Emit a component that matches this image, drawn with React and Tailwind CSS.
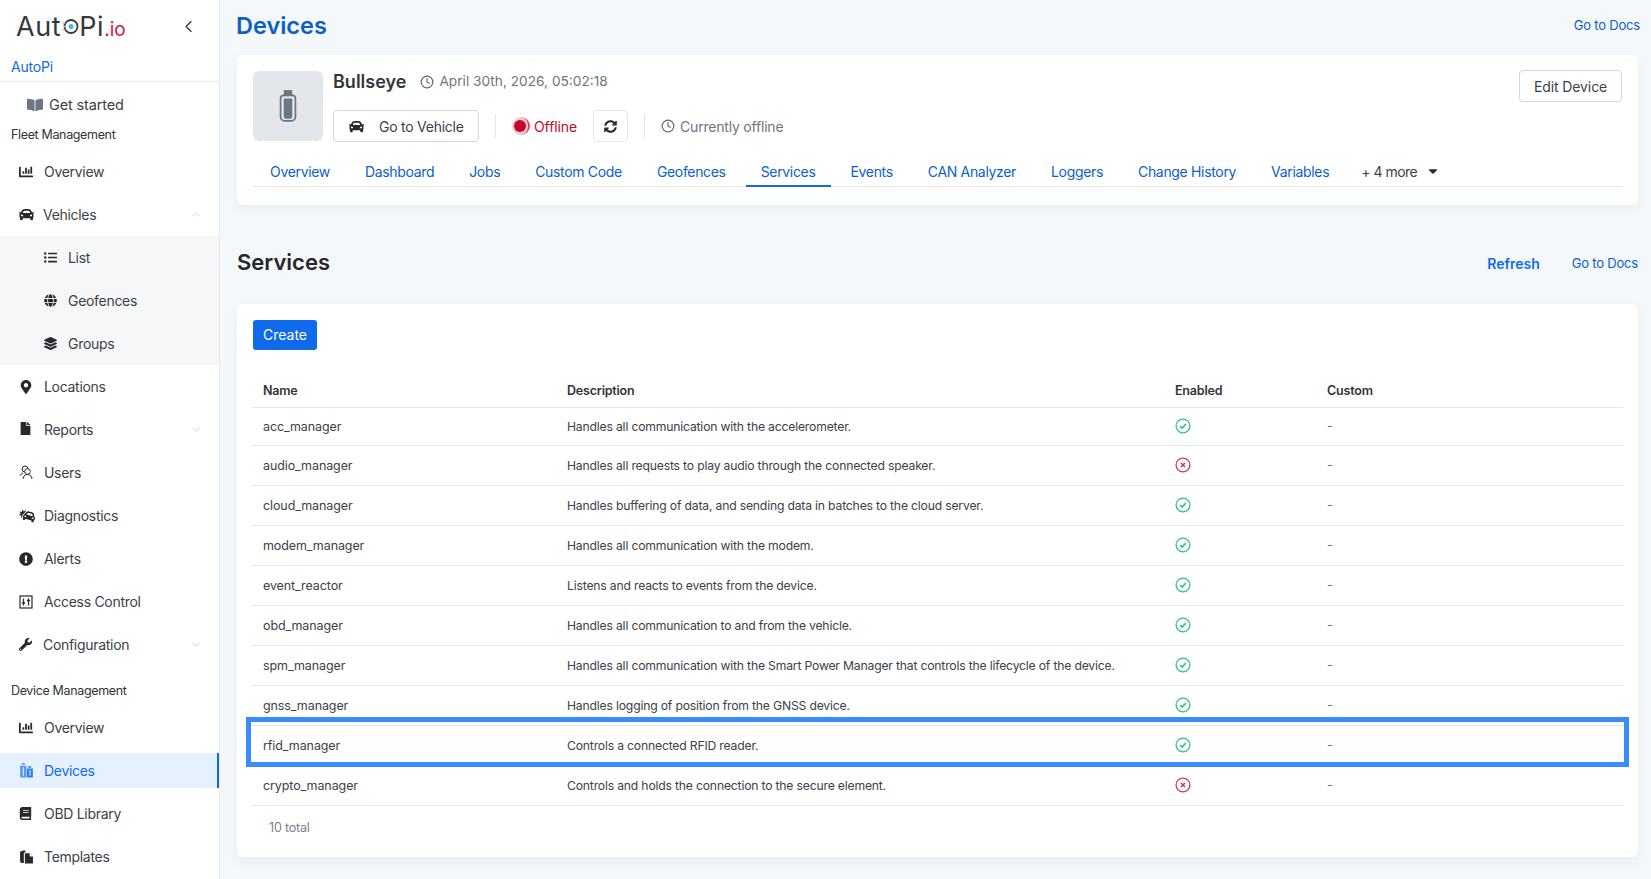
import React from "react";
import {
  FaBookOpen,
  FaCar,
  FaCarCrash,
  FaCaretDown,
  FaChartBar,
  FaExclamationCircle,
  FaFile,
  FaGlobe,
  FaLayerGroup,
  FaListUl,
  FaMapMarkerAlt,
  FaSyncAlt,
  FaWrench,
  FaBook,
} from "react-icons/fa";
import { FiChevronDown, FiChevronLeft, FiChevronUp, FiClock } from "react-icons/fi";

const UsersIcon = () => (
  <svg width="15" height="15" viewBox="0 0 15 15" fill="none" stroke="currentColor" strokeWidth="1">
    <circle cx="6" cy="4" r="3" />
    <circle cx="8.500" cy="6.500" r="2.800" fill="#fff" />
    <path d="M.8 10.500 4 7.800M4 14c.2-2.800 1.800-4.500 4.500-4.500s4.300 1.700 4.500 4.500" />
  </svg>
);

const AccessIcon = () => (
  <svg width="14" height="14" viewBox="0 0 14 14" fill="none" stroke="currentColor">
    <rect x="1" y="1" width="12" height="12" strokeWidth="1.200" />
    <path d="M4.500 3.500v7M9.500 3.500v7" strokeWidth="1.200" />
    <path d="M3 8h3M8 5.500h3" strokeWidth="1.600" />
  </svg>
);

const DevicesIcon = () => (
  <svg width="15" height="17" viewBox="0 0 14 16" fill="currentColor">
    <path d="M2.500 1h3v1.500h-3zM1 3.500h6v11H1z" fillOpacity=".75" />
    <path d="M8.500 4h3v1.500h-3zM7.500 6h5.500v8.500H7.500z" />
    <path d="M9.800 7.500h1v5.500h-1zM3.500 5h1v8h-1z" fill="#e5f1fc" />
  </svg>
);

const TemplatesIcon = () => (
  <svg width="15" height="15" viewBox="0 0 14 14" fill="currentColor">
    <path d="M1 2.500 4 1.500l2 0v1.500L4.500 3.500V13H2.500L1 12z" />
    <path d="M5.500 4h4.500l3 3v6.500H5.500z" />
    <path d="M10 4v3h3z" fill="#fff" />
  </svg>
);

const CheckIcon = () => (
  <svg width="16" height="16" viewBox="0 0 16 16" fill="none" className="text-[#2fc77e]" stroke="currentColor">
    <circle cx="8" cy="8" r="6.900" strokeWidth="1.300" />
    <path d="M5.200 8.200 7.200 10l3.600-3.800" strokeWidth="1.700" />
  </svg>
);

const CrossIcon = () => (
  <svg width="16" height="16" viewBox="0 0 16 16" fill="none" className="text-[#d63a4c]" stroke="currentColor">
    <circle cx="8" cy="8" r="6.900" strokeWidth="1.300" />
    <path d="M6 6l4 4M10 6l-4 4" strokeWidth="1.600" />
  </svg>
);

const NavItem = ({ icon, label, textLeft = "ml-[11px]", chevron, active }) => (
  <div
    className={`relative flex h-[43px] items-center pl-[19px] text-[14px] tracking-[-0.3px] ${
      active ? "text-[#0f6bec]" : "text-[#3b4148]"
    }`}
  >
    {active && <div className="absolute inset-x-0 top-[4px] bottom-[4px] border-r-2 border-[#0f6bec] bg-[#e5f1fc]" />}
    <span className="relative flex w-[14px] justify-start text-[#26292e]">
      <span className={active ? "text-[#2d7ee6]" : ""}>{icon}</span>
    </span>
    <span className={`relative pb-[1px] ${textLeft}`}>{label}</span>
    {chevron === "up" && <FiChevronUp className="absolute right-[16px] text-[#a8adb3]" size={13} strokeWidth={1} />}
    {chevron === "down" && <FiChevronDown className="absolute right-[16px] text-[#a8adb3]" size={13} strokeWidth={1} />}
  </div>
);

const SubItem = ({ icon, label }) => (
  <div className="flex h-[43px] items-center pl-[43px] text-[14px] tracking-[-0.3px] text-[#3b4148]">
    <span className="flex w-[15px] justify-center text-[#26292e]">{icon}</span>
    <span className="ml-[10px] pb-[1px]">{label}</span>
  </div>
);

const Sidebar = () => (
  <aside className="flex h-[879px] w-[220px] shrink-0 flex-col overflow-hidden border-r border-[#e8ebee] bg-white">
    <div className="flex h-[56px] items-center justify-between pb-[4px] pl-[16px] pr-[21px]">
      <div className="flex items-baseline text-[27px] leading-none tracking-[0.6px] text-[#36373a]">
        Aut
        <svg width="17" height="17" viewBox="0 0 17 17" className="mx-[0.5px] self-center">
          <circle cx="9" cy="8.500" r="6.500" fill="none" stroke="#3a3b3d" strokeWidth="1.800" />
          <circle cx="9" cy="8.500" r="2.500" fill="#38bdf8" />
          <path d="M0 5h3M1 8.500h2M0 12h3" stroke="#c9cbcd" strokeWidth="1.500" />
        </svg>
        Pi
        <span className="text-[19px] tracking-normal text-[#d6123f]">.io</span>
      </div>
      <FiChevronLeft size={19} className="text-[#3b4148]" />
    </div>
    <div className="h-[26px] border-b border-[#e8ebee] pl-[11px] pt-[1px] text-[14px] leading-[20px] tracking-[-0.2px] text-[#0f6bec]">
      AutoPi
    </div>
    <div className="flex h-[40px] items-center pl-[27px] pt-[6px] text-[14.500px] tracking-[-0.15px] text-[#3b4148]">
      <FaBookOpen size={16} className="text-[#6c7683]" />
      <span className="ml-[6px]">Get started</span>
    </div>
    <div className="flex h-[28px] items-start pl-[11px] pt-[4px] text-[12.500px] tracking-[-0.35px] text-[#2f343a]">
      Fleet Management
    </div>
    <NavItem icon={<FaChartBar size={14} />} label="Overview" />
    <NavItem icon={<FaCar size={15} />} label="Vehicles" textLeft="ml-[10px]" chevron="up" />
    <div className="bg-[#f6f7f9]">
      <SubItem icon={<FaListUl size={13} />} label="List" />
      <SubItem icon={<FaGlobe size={13} />} label="Geofences" />
      <SubItem icon={<FaLayerGroup size={13} />} label="Groups" />
    </div>
    <NavItem icon={<FaMapMarkerAlt size={14} />} label="Locations" />
    <NavItem icon={<FaFile size={13} className="-mt-[2px]" />} label="Reports" chevron="down" />
    <NavItem icon={<UsersIcon />} label="Users" />
    <NavItem icon={<FaCarCrash size={16} />} label="Diagnostics" />
    <NavItem icon={<FaExclamationCircle size={14} />} label="Alerts" />
    <NavItem icon={<AccessIcon />} label="Access Control" />
    <NavItem icon={<FaWrench size={13} />} label="Configuration" textLeft="ml-[10px]" chevron="down" />
    <div className="flex h-[40px] items-end pb-[5px] pl-[11px] text-[12.500px] tracking-[-0.35px] text-[#2f343a]">
      Device Management
    </div>
    <NavItem icon={<FaChartBar size={14} />} label="Overview" />
    <NavItem icon={<DevicesIcon />} label="Devices" active />
    <NavItem icon={<FaBook size={13} />} label="OBD Library" />
    <NavItem icon={<TemplatesIcon />} label="Templates" />
  </aside>
);

const tabs = [
  "Overview",
  "Dashboard",
  "Jobs",
  "Custom Code",
  "Geofences",
  "Services",
  "Events",
  "CAN Analyzer",
  "Loggers",
  "Change History",
  "Variables",
];

const DeviceCard = () => (
  <div className="rounded-[6px] bg-white px-[16px] pt-[16px] shadow-[0_4px_12px_rgba(60,80,100,0.07)]">
    <div className="flex items-start">
      <div className="flex h-[70px] w-[70px] items-center justify-center rounded-[6px] bg-[#e3e6eb]">
        <svg width="22" height="34" viewBox="0 0 20 32">
          <path d="M6 1h8v5H6z" fill="#6d7780" />
          <path d="M3 9a3 3 0 0 1 3-3h8a3 3 0 0 1 3 3v17a4 4 0 0 1-4 4H7a4 4 0 0 1-4-4z" fill="none" stroke="#6d7780" strokeWidth="1.600" />
          <path d="M6 9h8v17a2 2 0 0 1-2 2H8a2 2 0 0 1-2-2z" fill="#6d7780" />
        </svg>
      </div>
      <div className="ml-[10px]">
        <div className="flex h-[21px] items-center">
          <span className="text-[18px] font-semibold text-[#34383e]">Bullseye</span>
          <FiClock size={14} className="ml-[14px] text-[#5f666e]" />
          <span className="ml-[5px] text-[13.700px] text-[#6f757c]">April 30th, 2026, 05:02:18</span>
        </div>
        <div className="mt-[18px] flex h-[32px] items-center">
          <button className="flex h-[32px] w-[146px] items-center rounded-[4px] border border-[#d3d6da] pl-[15px] text-[14px] tracking-[-0.25px] text-[#3b4148]">
            <FaCar size={15} className="text-[#26292e]" />
            <span className="ml-[15px]">Go to Vehicle</span>
          </button>
          <div className="mx-[16px] h-[24px] w-px bg-[#e3e5e8]" />
          <div className="relative flex h-[18px] w-[18px] items-center justify-center rounded-full border-r-2 border-r-[#de4a66] bg-[#f6c9d2]">
            <div className="h-[12px] w-[12px] rounded-full bg-[#c4072c]" />
          </div>
          <span className="ml-[4px] text-[14px] tracking-[-0.1px] text-[#c4072c]">Offline</span>
          <button className="ml-[16px] flex h-[32px] w-[35px] items-center justify-center rounded-[4px] border border-[#e3e5e8]">
            <FaSyncAlt size={13} className="text-[#26292e]" />
          </button>
          <div className="mx-[16px] h-[24px] w-px bg-[#e3e5e8]" />
          <FiClock size={14} className="text-[#5f666e]" />
          <span className="ml-[5px] text-[14px] tracking-[-0.2px] text-[#6f757c]">Currently offline</span>
        </div>
      </div>
      <button className="-mt-[1px] ml-auto h-[32px] w-[103px] rounded-[4px] border border-[#d3d6da] text-[14px] tracking-[-0.1px] text-[#3b4148]">
        Edit Device
      </button>
    </div>
    <div className="mt-[15px] flex h-[30px] items-stretch border-b border-[#e3e5e8] pl-[2px]">
      {tabs.map((t) => (
        <div
          key={t}
          className={`-mb-px mr-[5px] flex items-center border-b-2 px-[15px] text-[14px] tracking-[-0.33px] text-[#0b5fc9] ${
            t === "Services" ? "border-[#0f6bec]" : "border-transparent"
          }`}
        >
          {t}
        </div>
      ))}
      <div className="ml-[12px] flex items-center pb-[1px] text-[14px] tracking-[-0.5px] text-[#3b4148]">
        + 4 more
        <FaCaretDown size={14} className="ml-[9px] text-[#26292e]" />
      </div>
    </div>
    <div className="h-[18px]" />
  </div>
);

const rows = [
  ["acc_manager", "Handles all communication with the accelerometer.", true],
  ["audio_manager", "Handles all requests to play audio through the connected speaker.", false],
  ["cloud_manager", "Handles buffering of data, and sending data in batches to the cloud server.", true],
  ["modem_manager", "Handles all communication with the modem.", true],
  ["event_reactor", "Listens and reacts to events from the device.", true],
  ["obd_manager", "Handles all communication to and from the vehicle.", true],
  ["spm_manager", "Handles all communication with the Smart Power Manager that controls the lifecycle of the device.", true],
  ["gnss_manager", "Handles logging of position from the GNSS device.", true],
  ["rfid_manager", "Controls a connected RFID reader.", true],
  ["crypto_manager", "Controls and holds the connection to the secure element.", false],
];

const ServicesTable = () => (
  <div className="rounded-[6px] bg-white px-[15px] pb-[20px] pt-[16px] shadow-[0_4px_12px_rgba(60,80,100,0.07)]">
    <button className="ml-px h-[30px] w-[64px] rounded-[3px] bg-[#0f6bec] pb-[1px] text-[14px] text-white">Create</button>
    <table className="mt-[21px] w-full table-fixed text-left text-[12.500px] text-[#3b4148]">
      <thead>
        <tr className="h-[36px] border-b border-[#e3e5e8] text-[#2f343a]">
          <th className="w-[304px] pl-[11px] pt-[5px] font-semibold tracking-[-0.2px]">Name</th>
          <th className="w-[608px] pl-[11px] pt-[5px] font-semibold tracking-[-0.2px]">Description</th>
          <th className="w-[152px] pl-[11px] pt-[5px] font-semibold tracking-[-0.2px]">Enabled</th>
          <th className="pl-[11px] pt-[5px] font-semibold tracking-[-0.2px]">Custom</th>
        </tr>
      </thead>
      <tbody>
        {rows.map(([name, desc, enabled], i) => (
          <tr key={name} className={`border-b border-[#e3e5e8] ${i === 0 ? "h-[38px]" : "h-[40px]"}`}>
            <td className="pl-[11px] pt-[2px] tracking-[-0.1px]">{name}</td>
            <td className="pl-[11px] pt-[2px] text-[12.200px] tracking-[-0.19px]">{desc}</td>
            <td className="pl-[11px]">{enabled ? <CheckIcon /> : <CrossIcon />}</td>
            <td className="pl-[11px] pt-[1px] text-[#6f757c]">-</td>
          </tr>
        ))}
      </tbody>
    </table>
    <div className="mt-[13px] pl-[17px] text-[12.500px] tracking-[-0.2px] text-[#7b8087]">10 total</div>
  </div>
);

export default function App() {
  return (
    <div className="flex h-[879px] overflow-hidden bg-[#f5f8fa] font-['Inter',sans-serif]">
      <Sidebar />
      <main className="relative min-w-0 flex-1 pl-[17px] pr-[13px]">
        <div className="flex h-[55px] items-center justify-between pb-[3px]">
          <h1 className="-ml-[1px] text-[23.500px] font-semibold text-[#0b5fc9]">Devices</h1>
          <a className="-mr-[2px] text-[13px] tracking-[-0.2px] text-[#0b5fc9]">Go to Docs</a>
        </div>
        <DeviceCard />
        <div className="flex h-[99px] items-center justify-between pt-[16px]">
          <h2 className="text-[22px] font-semibold text-[#24272b]">Services</h2>
          <div className="flex items-center pt-[2px]">
            <a className="text-[14px] font-semibold text-[#0f6bec]">Refresh</a>
            <a className="ml-[32px] text-[13px] tracking-[-0.2px] text-[#0b5fc9]">Go to Docs</a>
          </div>
        </div>
        <ServicesTable />
        {/* highlight round the rfid row */}
        <div className="absolute left-[26px] top-[717px] h-[50px] w-[1383px] border-[5px] border-[#3b8cfb]" />
      </main>
    </div>
  );
}
